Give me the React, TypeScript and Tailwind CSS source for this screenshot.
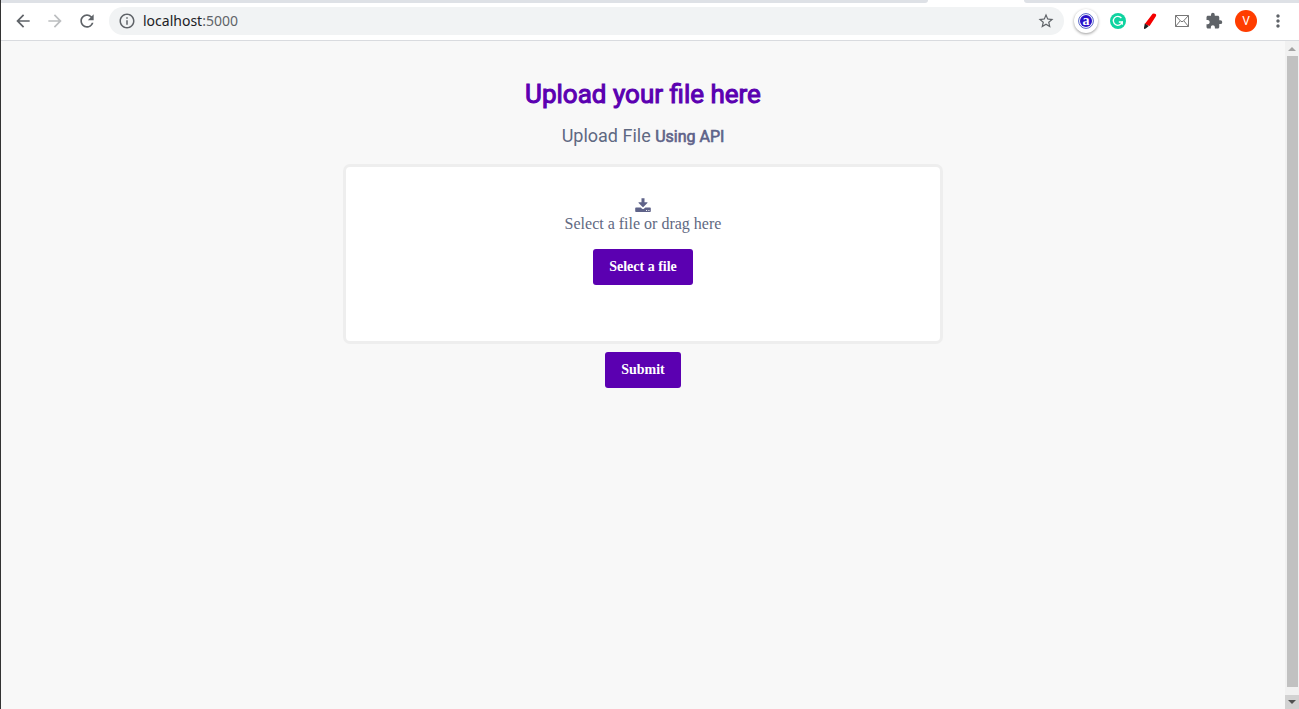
import { useRef } from "react";
import {
  MdArrowBack,
  MdArrowForward,
  MdExtension,
  MdInfoOutline,
  MdMoreVert,
  MdRefresh,
  MdStarBorder,
} from "react-icons/md";

function TabStrip() {
  return (
    <div className="flex h-[3px] justify-between gap-24 bg-white">
      <div className="flex-1 rounded-br-md bg-[#dee1e6]" />
      <div className="w-[275px] rounded-bl-md bg-[#dee1e6]" />
    </div>
  );
}

function Toolbar() {
  return (
    <header className="flex h-[38px] items-center border-b border-[#d9dbdf] bg-white pr-[9px] pb-px pl-3 text-[#5f6368]">
      <nav className="flex gap-3">
        <button aria-label="Back">
          <MdArrowBack size={20} />
        </button>
        <button aria-label="Forward" className="text-[#bcbec0]">
          <MdArrowForward size={20} />
        </button>
        <button aria-label="Reload">
          <MdRefresh size={20} />
        </button>
      </nav>
      <div className="mr-2.5 ml-3 flex h-7 flex-1 items-center gap-[7px] rounded-full bg-[#f1f3f4] px-[9px]">
        <MdInfoOutline size={18} />
        <div className="flex-1 font-['Noto_Sans',sans-serif] text-sm">
          <span className="text-[#202124]">localhost</span>:5000
        </div>
        <button aria-label="Bookmark this page">
          <MdStarBorder size={18} />
        </button>
      </div>
      <div className="flex items-center gap-2">
        <button
          aria-label="Extension A"
          className="flex size-6 items-center justify-center rounded-full bg-white shadow-[0_1px_3px_rgba(0,0,0,0.4)]"
        >
          <svg width="16" height="16" viewBox="0 0 16 16">
            <circle cx="8" cy="8" r="7.4" fill="#fff" stroke="#5665c8" strokeWidth="1" />
            <circle cx="8" cy="8" r="6" fill="#2a12c9" />
            <text
              x="8"
              y="12"
              textAnchor="middle"
              fill="#fff"
              className="font-['Liberation_Serif',serif] text-sm font-bold"
            >
              a
            </text>
          </svg>
        </button>
        <button aria-label="Grammar checker" className="flex size-6 items-center justify-center">
          <svg width="16" height="16" viewBox="0 0 16 16" fill="none">
            <circle cx="8" cy="8" r="8" fill="#0fd3a0" />
            <path d="M11.4 5A4.5 4.5 0 1 0 12.2 9H8.8" stroke="#fff" strokeWidth="1.3" />
            <path d="M12.3 8.6V11.8" stroke="#fff" strokeWidth="1.2" />
          </svg>
        </button>
        <button aria-label="Marker" className="flex size-6 items-center justify-center">
          <svg width="16" height="16" viewBox="0 0 16 16">
            <path d="M10.6 .8Q11.8 0 13.6 .9Q14.8 1.8 13.9 3.2L7.6 13L2.8 11Z" fill="#f40000" />
            <path d="M2.8 10.4L6.8 13L3.8 15.4L2 16L2 14.4Z" fill="#1b2020" />
          </svg>
        </button>
        <button aria-label="Mail" className="flex size-6 items-center justify-center">
          <svg width="16" height="16" viewBox="0 0 16 16" fill="none" stroke="#777" strokeWidth="1">
            <path d="M1.5 2.5H14.5V13.5H1.5ZM1.5 2.5L7 8.5H9L14.5 2.5M1.5 13.5L6.2 7.8M14.5 13.5L9.8 7.8" />
          </svg>
        </button>
        <button aria-label="Extensions" className="flex size-6 items-center justify-center">
          <MdExtension size={18} />
        </button>
        <button
          aria-label="Profile"
          className="mx-px flex size-[22px] items-center justify-center rounded-full bg-[#ff3d00] font-['Roboto',sans-serif] text-xs text-white"
        >
          V
        </button>
        <button aria-label="Menu" className="flex size-6 items-center justify-center">
          <MdMoreVert size={20} />
        </button>
      </div>
    </header>
  );
}

function Scrollbar() {
  return (
    <div className="flex w-[14px] flex-col bg-[#f1f1f1]" aria-hidden="true">
      <div className="flex h-[15px] items-center justify-center">
        <svg width="8" height="4" viewBox="0 0 8 4" fill="#a3a3a3">
          <path d="M0 4L4 0L8 4Z" />
        </svg>
      </div>
      <div className="ml-0.5 mr-px flex-1 bg-[#c1c1c1]" />
      <div className="h-2" />
      <div className="flex h-[14px] items-center justify-center bg-[#d2d2d2]">
        <svg width="8" height="4" viewBox="0 0 8 4" fill="#505050">
          <path d="M0 0H8L4 4Z" />
        </svg>
      </div>
    </div>
  );
}

function DownloadIcon() {
  return (
    <svg width="16" height="16" viewBox="0 0 16 16" fill="#5f6389" aria-hidden="true">
      <path d="M6.5 1.2H9.5V5.2H12.2Q12.8 5.3 12.4 5.9L8.4 10.1Q8 10.4 7.6 10.1L3.6 5.9Q3.2 5.3 3.8 5.2H6.5Z" />
      <path
        fillRule="evenodd"
        d="M1 10.5H5.7L7.1 11.8Q8 12.4 8.9 11.8L10.3 10.5H15Q15.8 10.5 15.8 11.3V14.2Q15.8 15 15 15H1Q.2 15 .2 14.2V11.3Q.2 10.5 1 10.5ZM11.1 13V14H12.1V13ZM13.4 13V14H14.4V13Z"
      />
    </svg>
  );
}

const buttonClass =
  "h-9 rounded-[3px] bg-[#5b00b1] px-4 font-['Liberation_Serif',serif] text-sm font-bold text-white";

function UploadForm() {
  const fileInput = useRef<HTMLInputElement>(null);
  return (
    <main className="flex-1 px-4 pt-[37px] text-center text-[#5f6982]">
      <h2 className="font-['Roboto',sans-serif] text-[26px] leading-8 font-normal text-[#5b00b1] [-webkit-text-stroke:0.04em]">
        Upload your file here
      </h2>
      <p className="mt-3.5 font-['Roboto',sans-serif] text-lg leading-6">
        Upload File{" "}
        <strong className="text-base font-normal text-[#5f6389] [-webkit-text-stroke:0.04em]">Using API</strong>
      </p>
      <form className="mt-[15px]" onSubmit={(event) => event.preventDefault()}>
        <div className="mx-auto flex h-[180px] max-w-[600px] flex-col items-center rounded-[7px] border-[3px] border-[#eee] bg-white pt-[30px] font-['Liberation_Serif',serif]">
          <DownloadIcon />
          <label htmlFor="file" className="text-base leading-[22px]">
            Select a file or drag here
          </label>
          <input id="file" ref={fileInput} type="file" className="hidden" />
          <button type="button" className={`${buttonClass} mt-3.5`} onClick={() => fileInput.current?.click()}>
            Select a file
          </button>
        </div>
        <button type="submit" className={`${buttonClass} mt-2`}>
          Submit
        </button>
      </form>
    </main>
  );
}

export default function App() {
  return (
    <div className="flex min-h-screen flex-col border-l border-[#333] bg-[#f8f8f8]">
      <TabStrip />
      <Toolbar />
      <div className="flex flex-1">
        <UploadForm />
        <Scrollbar />
      </div>
    </div>
  );
}
